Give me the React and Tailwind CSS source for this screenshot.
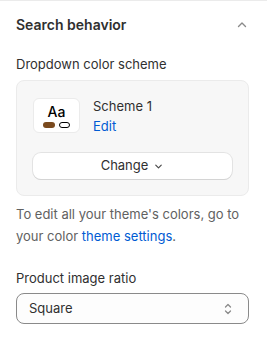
import React from 'react';

const ChevronUp = () => (
    <svg width="14" height="14" viewBox="0 0 14 14" fill="none">
        <path d="M3.5 8.5L7 5L10.5 8.5" stroke="#8a8a8a" strokeWidth="1.4" strokeLinecap="round" strokeLinejoin="round" />
    </svg>
);

const ChevronDown = () => (
    <svg width="11" height="11" viewBox="0 0 12 12" fill="none">
        <path d="M3 4.5L6 7.5L9 4.5" stroke="#4a4a4a" strokeWidth="1.3" strokeLinecap="round" strokeLinejoin="round" />
    </svg>
);

const SelectArrows = () => (
    <svg width="12" height="16" viewBox="0 0 12 16" fill="none">
        <path d="M3.5 6L6 3.5L8.5 6" stroke="#8a8a8a" strokeWidth="1.3" strokeLinecap="round" strokeLinejoin="round" />
        <path d="M3.5 10L6 12.5L8.5 10" stroke="#8a8a8a" strokeWidth="1.3" strokeLinecap="round" strokeLinejoin="round" />
    </svg>
);

const App = () => {
    return (
        <div className="w-[267px] h-[337px] bg-white border-t border-[#ebebeb] text-[#303030] text-[13px] font-['Inter',sans-serif] pl-4 pr-[18px]">
            {/* Section header */}
            <div className="flex items-center justify-between pt-[14px] h-[34px]">
                <h2 className="text-[14px] font-semibold leading-5">Search behavior</h2>
                <span><ChevronUp /></span>
            </div>

            {/* Color scheme picker */}
            <p className="mt-[19px] leading-5">Dropdown color scheme</p>
            <div className="mt-[6px] bg-[#f7f7f7] border border-[#ebebeb] rounded-lg px-4 pt-[17px] pb-4">
                <div className="flex items-start gap-[13px]">
                    <div className="w-[47px] h-[35px] bg-white border border-[#ebebeb] rounded-md flex flex-col items-center justify-center">
                        <span className="text-[14px] font-medium leading-4 text-black">Aa</span>
                        <div className="flex items-center gap-[4px] mt-[2px]">
                            <span className="w-[12px] h-[6px] rounded-full bg-[#7a4a1e]" />
                            <span className="w-[11px] h-[6px] rounded-full border border-black" />
                        </div>
                    </div>
                    <div className="flex flex-col leading-5 -mt-[2px]">
                        <span>Scheme 1</span>
                        <a className="text-[#005bd3]">Edit</a>
                    </div>
                </div>
                <button className="mt-[17px] w-full h-[26px] bg-white rounded-lg shadow-[0_1px_0_0_#d4d4d4,0_0_0_1px_#e3e3e3] flex items-center justify-center gap-[5px] text-[#303030]">
                    Change <ChevronDown />
                </button>
            </div>

            <p className="mt-[7px] leading-[22px] text-[#616161]">
                To edit all your theme's colors, go to your color <a className="text-[#005bd3]">theme settings</a>.
            </p>

            {/* Image ratio */}
            <p className="mt-[21px] leading-5">Product image ratio</p>
            <div className="mt-[5px] h-[31px] border border-[#8a8a8a] rounded-lg bg-[#fdfdfd] flex items-center justify-between pl-3 pr-[14px]">
                <span>Square</span>
                <SelectArrows />
            </div>
        </div>
    );
};

export default App;
